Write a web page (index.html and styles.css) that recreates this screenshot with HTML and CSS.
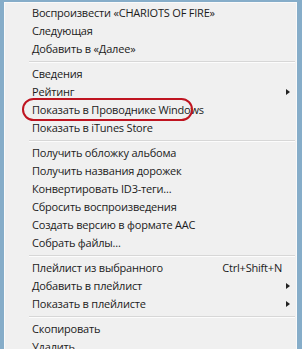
FILE: index.html
```html
<!DOCTYPE html>
<html>
<head>
<meta charset="utf-8">
<link rel="stylesheet" href="styles.css">
</head>
<body>
<div class="menu">
  <div class="item">Воспроизвести «CHARIOTS OF FIRE»</div>
  <div class="item">Следующая</div>
  <div class="item">Добавить в «Далее»</div>
  <div class="sep"></div>
  <div class="item">Сведения</div>
  <div class="item sub">Рейтинг</div>
  <div class="item">Показать в Проводнике Windows</div>
  <div class="item">Показать в iTunes Store</div>
  <div class="sep"></div>
  <div class="item">Получить обложку альбома</div>
  <div class="item">Получить названия дорожек</div>
  <div class="item">Конвертировать ID3-теги...</div>
  <div class="item">Сбросить воспроизведения</div>
  <div class="item">Создать версию в формате AAC</div>
  <div class="item">Собрать файлы...</div>
  <div class="sep"></div>
  <div class="item">Плейлист из выбранного<span class="key">Ctrl+Shift+N</span></div>
  <div class="item sub">Добавить в плейлист</div>
  <div class="item sub">Показать в плейлисте</div>
  <div class="sep"></div>
  <div class="item">Скопировать</div>
  <div class="item">Удалить</div>
  <div class="mark"></div>
</div>
</body>
</html>
```
FILE: styles.css
```css
html, body {
  margin: 0;
  padding: 0;
  background: #86adc9;
  overflow: hidden;
}
.menu {
  position: relative;
  margin: 2px 5px 0 4px;
  padding-top: 1px;
  background: #f0f0f0;
  border-top: 1px solid #fafafa;
  border-left: 1px solid #fafafa;
  border-right: 1px solid #fafafa;
  font-family: "Open Sans", "Noto Sans", sans-serif;
  font-size: 11px;
  letter-spacing: -0.2px;
  color: #1b1b1b;
}
.item {
  height: 18px;
  line-height: 18px;
  padding-left: 27px;
  padding-right: 14px;
  display: flex;
  justify-content: space-between;
  align-items: center;
  white-space: nowrap;
  position: relative;
}
.item.sub::after {
  content: "";
  position: absolute;
  right: 6px;
  top: 6px;
  border-left: 4px solid #222;
  border-top: 3.5px solid transparent;
  border-bottom: 3.5px solid transparent;
}
.sep {
  height: 7px;
  margin-left: 24px;
  margin-right: 1px;
  position: relative;
}
.sep::before {
  content: "";
  position: absolute;
  left: 0;
  right: 0;
  top: 3px;
  height: 1px;
  background: #d7d7d7;
  border-bottom: 1px solid #fcfcfc;
}
.mark {
  position: absolute;
  left: 17px;
  top: 95px;
  width: 167px;
  height: 19px;
  border: 2px solid #bf1420;
  border-radius: 12px;
}
```
